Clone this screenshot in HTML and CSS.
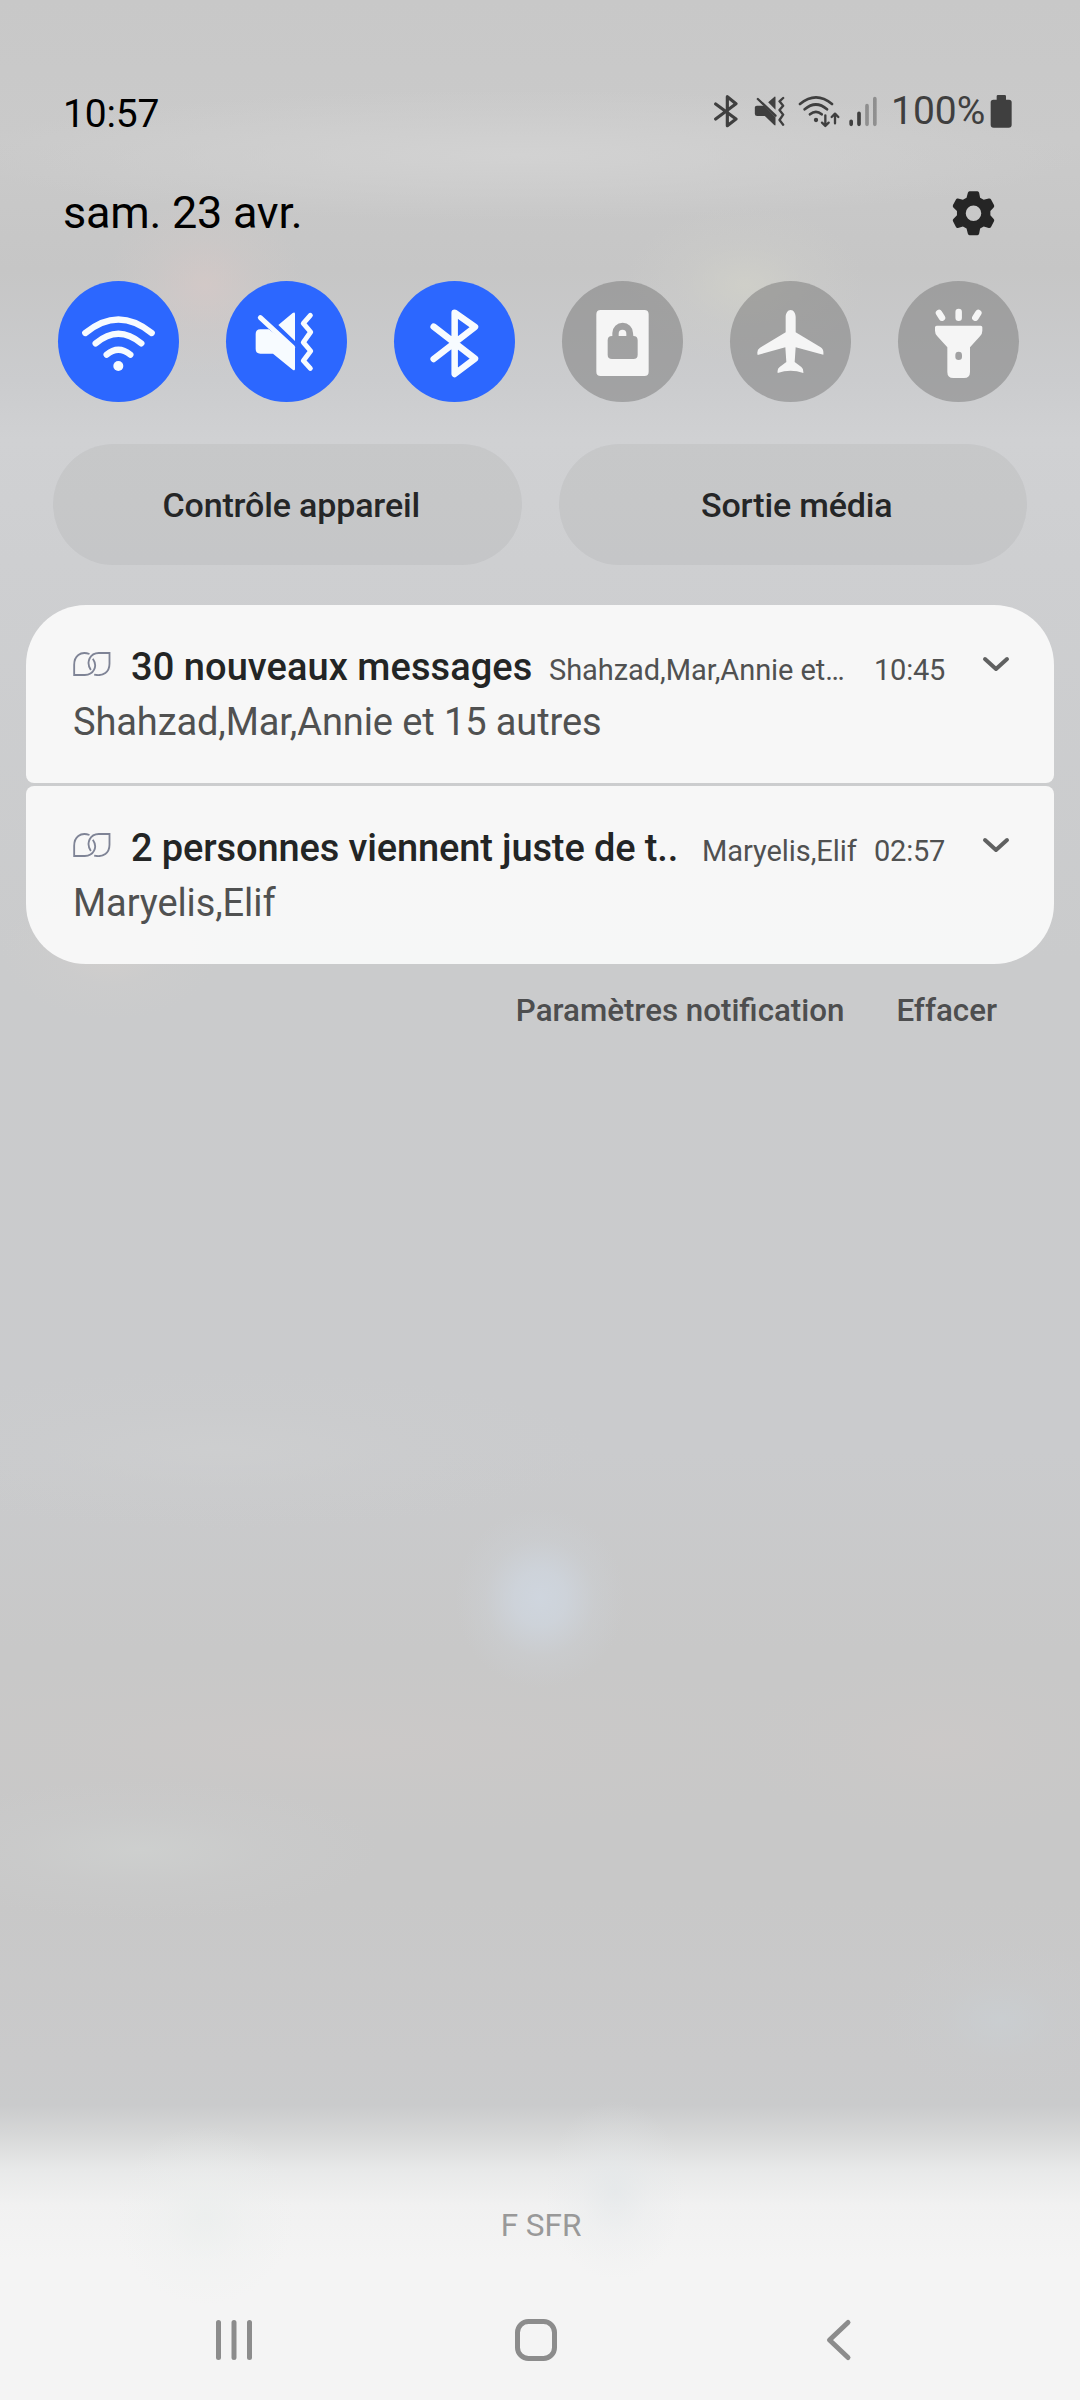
FILE: index.html
```html
<!DOCTYPE html>
<html lang="fr">
<head>
<meta charset="utf-8">
<title>Notifications</title>
<link rel="stylesheet" href="styles.css">
</head>
<body>
<div class="screen">
  <header class="status">
    <span class="clock">10:57</span>
    <div class="indicators">
      <svg class="i-bt" viewBox="100 72 72 102"><path class="line w8" d="M105 102 L166 147 L140 167 V80 L166 101 L105 147"/></svg>
      <svg class="i-mute" viewBox="220 72 92 102"><path class="solid" d="M262 97 L281 80 Q284 79 284 82 V119 Z M222 112 Q222 107 228 107 H238 L250 107 L284 142 V164 Q284 168 280 165 L252 138 H229 Q222 138 222 131 Z"/><path class="line w6" d="M231 87 L284 137 M307 84 L296 94 L307 107 L296 120 L307 134 L296 150 L307 164"/></svg>
      <svg class="i-wifi" viewBox="351 72 126 102"><path class="line w7" d="M357 102 Q405 62 453 102 M371 118 Q405 89 438 118 M387 133 Q405 118 422 133"/><circle class="solid" cx="405" cy="150" r="6.5"/><path class="line w6" d="M433 136 V167 M423 158 L433 168 L443 158 M462 160 V131 M452 141 L462 131 L472 141"/></svg>
      <svg class="i-signal" viewBox="504 72 84 102"><path class="line w11" d="M510.500 154 V163 M534 130 V163"/><path class="line w11 faded" d="M558 107 V163 M581.500 86 V163"/></svg>
      <span class="percent">100%</span>
      <svg class="i-battery" viewBox="931 72 66 102"><path class="solid" d="M951 79 Q951 75 955 75 H975 Q979 75 979 79 V89 H988 Q996 89 996 97 V164 Q996 173 987 173 H942 Q933 173 933 164 V97 Q933 89 941 89 H951 Z"/></svg>
    </div>
  </header>

  <div class="date-row">
    <span>sam. 23 avr.</span>
    <svg class="gear" viewBox="816 358 130 138"><path d="M869 361 H893 Q897 361 898 366 L901 381 L912 387 L927 383 Q932 382 934 386 L943 403 Q945 407 942 410 L932 421 V434 L942 445 Q945 448 943 452 L934 469 Q932 473 927 472 L912 468 L901 474 L898 490 Q897 494 893 494 H869 Q865 494 864 490 L860 474 L849 468 L834 472 Q830 473 828 469 L819 452 Q817 448 820 445 L831 434 V421 L820 410 Q817 407 819 403 L828 386 Q830 382 834 383 L849 387 L860 381 L864 366 Q865 361 869 361 Z M881 404 A23.500 23.500 0 1 0 881 451 A23.500 23.500 0 1 0 881 404 Z"/></svg>
  </div>

  <div class="tiles">
    <div class="tile on"><svg viewBox="84 63 363 363"><path class="line w18" d="M166 219 Q265 138 365 219 M197 250 Q265 192 334 250 M230 284 Q265 254 301 284"/><circle class="solid" cx="265" cy="318" r="15"/></svg></div>
    <div class="tile on"><svg viewBox="588 63 363 363"><path class="solid" d="M745 195 L788 159 Q795 155 795 162 V243 Z M677 222 Q677 208 691 208 H716 L795 264 V326 Q795 334 788 329 L729 281 H691 Q677 281 677 267 Z"/><path class="line w15" d="M691 173 L788 262 M841 166 L820 190 L842 216 L820 247 L842 273 L820 302 L841 325"/></svg></div>
    <div class="tile on"><svg viewBox="1092 63 363 363"><path class="line w20" d="M1211 200 L1335 296 L1274 342 V158 L1335 201 L1211 297"/></svg></div>
    <div class="tile"><svg viewBox="66 63 363 363"><path class="solid" fill-rule="evenodd" d="M182 150 H313 Q326 150 326 163 V335 Q326 348 313 348 H182 Q169 348 169 335 V163 Q169 150 182 150 Z M216 228 Q203 228 203 241 V284 Q203 297 216 297 H280 Q293 297 293 284 V241 Q293 228 280 228 L279 219 A31 31 0 0 0 217 219 V228 Z M236 228 V221 A11.500 11.500 0 0 1 259 221 V228 Z"/></svg></div>
    <div class="tile"><svg viewBox="570 63 363 363"><path class="solid" d="M752 150 C761 150 767 160 767 172 V217 L842 262 Q852 268 850 284 L767 262 L764 306 L784 321 Q791 326 790 339 Q752 326 713 339 Q711 326 719 321 L739 306 L736 262 L653 285 Q649 269 660 263 L737 217 V172 C737 160 743 150 752 150 Z"/></svg></div>
    <div class="tile"><svg viewBox="1074 63 363 363"><path class="solid" fill-rule="evenodd" d="M1190 197 H1322 Q1327 197 1327 202 V212 Q1327 222 1320 229 L1290 262 V336 Q1290 354 1272 354 H1240 Q1222 354 1222 336 V262 L1192 229 Q1185 222 1185 212 V202 Q1185 197 1190 197 Z M1256 275 Q1246 275 1246 285 V291 Q1246 300 1256 300 Q1266 300 1266 291 V285 Q1266 275 1256 275 Z"/><path class="line w20" d="M1197 159 L1206 173 M1256 156 V173 M1315 159 L1306 173"/></svg></div>
  </div>

  <div class="shortcuts">
    <div class="shortcut">Contrôle appareil</div>
    <div class="shortcut">Sortie média</div>
  </div>

  <div class="notifications">
    <article class="card">
      <div class="head">
        <svg class="app" viewBox="21 37 113 72"><path d="M70 43 C42 33 24 50 24 75 V106 H56 C82 106 96 80 80 57 M84 105 C112 111 130 96 130 72 V40 H98 C72 40 58 67 74 91"/></svg>
        <span class="title t1">30 nouveaux messages</span>
        <span class="sub s1">Shahzad,Mar,Annie et…</span>
        <time>10:45</time>
        <svg class="chevron" viewBox="0 0 28 16"><path d="M3 3 L14 13 L25 3"/></svg>
      </div>
      <p>Shahzad,Mar,Annie et 15 autres</p>
    </article>
    <article class="card">
      <div class="head">
        <svg class="app" viewBox="21 37 113 72"><path d="M70 43 C42 33 24 50 24 75 V106 H56 C82 106 96 80 80 57 M84 105 C112 111 130 96 130 72 V40 H98 C72 40 58 67 74 91"/></svg>
        <span class="title t2">2 personnes viennent juste de t..</span>
        <span class="sub s2">Maryelis,Elif</span>
        <time>02:57</time>
        <svg class="chevron" viewBox="0 0 28 16"><path d="M3 3 L14 13 L25 3"/></svg>
      </div>
      <p>Maryelis,Elif</p>
    </article>
  </div>

  <div class="actions"><span>Paramètres notification</span><span>Effacer</span></div>

  <div class="carrier">F SFR</div>
  <nav class="nav">
    <svg viewBox="0 0 44 44"><path d="M6.500 4.500 V39.500 M22 4.500 V39.500 M37.500 4.500 V39.500"/></svg>
    <svg viewBox="0 0 44 44"><rect x="3.500" y="3.500" width="37" height="37" rx="11"/></svg>
    <svg viewBox="0 0 44 44"><path d="M32 4.500 L13.500 22 L32 39.500"/></svg>
  </nav>
</div>
</body>
</html>
```
FILE: styles.css
```css
body {
  margin: 0;
  font-family: Roboto, "Noto Sans", sans-serif;
}

.screen {
  width: 1080px;
  height: 2400px;
  box-sizing: border-box;
  padding-top: 88px;
  display: flex;
  flex-direction: column;
  overflow: hidden;
  background:
    radial-gradient(ellipse 85px 90px at 540px 1598px, rgba(207, 214, 223, .95), rgba(207, 214, 223, .75) 30%, rgba(206, 211, 217, .3) 65%, transparent),
    radial-gradient(ellipse 100px 90px at 205px 285px, rgba(214, 201, 199, .75), rgba(212, 202, 200, .3) 50%, transparent),
    radial-gradient(ellipse 120px 80px at 745px 285px, rgba(209, 209, 201, .8), rgba(208, 208, 203, .3) 50%, transparent),
    radial-gradient(ellipse 560px 65px at 520px 155px, rgba(211, 211, 211, .9), rgba(210, 210, 210, .5) 50%, transparent),
    radial-gradient(ellipse 110px 70px at 110px 950px, rgba(210, 207, 205, .9), rgba(208, 206, 205, .3) 50%, transparent),
    radial-gradient(ellipse 240px 70px at 140px 1850px, rgba(206, 208, 207, .9), rgba(205, 206, 206, .35) 50%, transparent),
    radial-gradient(ellipse 560px 90px at 330px 1745px, rgba(205, 201, 200, .7), rgba(204, 201, 200, .3) 50%, transparent),
    radial-gradient(ellipse 200px 90px at 940px 1745px, rgba(205, 201, 200, .7), rgba(204, 201, 200, .3) 50%, transparent),
    radial-gradient(ellipse 380px 80px at 220px 1450px, rgba(206, 207, 208, .8), rgba(205, 206, 207, .3) 50%, transparent),
    radial-gradient(ellipse 120px 80px at 1000px 2020px, rgba(202, 206, 209, .9), rgba(202, 204, 206, .3) 50%, transparent),
    radial-gradient(ellipse 70px 90px at 615px 2190px, rgba(227, 231, 233, .7), rgba(229, 232, 234, .25) 50%, transparent),
    radial-gradient(ellipse 90px 90px at 205px 2215px, rgba(235, 238, 237, .8), rgba(235, 238, 237, .25) 50%, transparent),
    linear-gradient(#c8c8c8 0, #cacaca 140px, #c6c6c6 270px, #cbccce 380px, #d0d1d3 440px, #cecfd1 560px, #cacbcc 960px, #cacbcd 1450px, #c8c8c8 1650px, #c8c8c8 1900px, #cacacb 2060px, #cacbcc 2105px, #d9dada 2140px, #e8e9e9 2170px, #f1f1f1 2205px, #f4f4f4 2260px);
}

.status {
  display: flex;
  justify-content: space-between;
  align-items: flex-start;
  height: 50px;
  padding: 0 68px 0 63px;
}
.clock { font-size: 39px; line-height: 53px; letter-spacing: -.2px; color: #000; }
.indicators { display: flex; align-items: center; height: 46px; color: #3f3f3f; }
.indicators svg { height: 34px; }
.i-bt { width: 24px; margin-right: 16px; }
.i-mute { width: 31px; margin-right: 13px; }
.i-wifi { width: 42px; margin-right: 9px; }
.i-signal { width: 28px; margin-right: 14px; }
.i-battery { width: 22px; }
.percent { width: 94px; margin-right: 5px; font-size: 39px; line-height: 46px; white-space: nowrap; }

.line { fill: none; stroke: currentColor; stroke-linecap: round; stroke-linejoin: round; }
.solid { fill: currentColor; }
.w6 { stroke-width: 7; }
.w7 { stroke-width: 8; }
.w8 { stroke-width: 9.5; }
.w11 { stroke-width: 11; }
.w15 { stroke-width: 15; }
.w18 { stroke-width: 19; }
.w20 { stroke-width: 19.5; }
.faded { opacity: .42; }

.date-row {
  display: flex;
  justify-content: space-between;
  align-items: center;
  height: 50px;
  margin-top: 50px;
  padding: 0 85px 0 63px;
  font-size: 45px;
  line-height: 52px;
  letter-spacing: -.25px;
  color: #000;
}
.gear { width: 43px; height: 46px; fill: #252525; fill-rule: evenodd; }

.tiles { display: flex; gap: 47px; margin-top: 43px; padding-left: 58px; }
.tile { width: 121px; height: 121px; border-radius: 50%; background: rgba(120, 120, 120, .5); color: #f5f5f5; }
.tile svg { display: block; width: 121px; height: 121px; }
.tile.on { background: #2c67ff; color: #f7fbff; }

.shortcuts { display: flex; gap: 37px; margin-top: 42px; padding: 0 53px; }
.shortcut {
  flex: 1;
  height: 121px;
  box-sizing: border-box;
  padding-left: 8px;
  border-radius: 61px;
  background: rgba(0, 0, 0, .045);
  font-size: 34px;
  font-weight: 500;
  letter-spacing: -.15px;
  line-height: 122px;
  text-align: center;
  color: #252627;
}

.notifications { display: flex; flex-direction: column; gap: 3px; margin: 40px 26px 0; }
.card {
  height: 178px;
  box-sizing: border-box;
  padding: 37px 44px 0 47px;
  border-radius: 8px;
  background: rgba(250, 250, 250, .93);
  color: #505151;
}
.card:first-child { border-radius: 60px 60px 8px 8px; }
.card:last-child { border-radius: 8px 8px 60px 60px; }
.head { display: flex; align-items: baseline; height: 50px; line-height: 50px; white-space: nowrap; }
.app { align-self: flex-start; width: 38px; height: 24px; margin: 10px 20px 0 0; fill: none; stroke: #7f8496; stroke-width: 5.5; }
.title { font-size: 38px; font-weight: 500; color: #232525; }
.t1 { width: 418px; letter-spacing: .06px; }
.t2 { width: 571px; letter-spacing: -.13px; }
.sub, .card time { font-size: 29px; letter-spacing: -.06px; }
.s1 { width: 325px; }
.s2 { width: 172px; }
.card time { width: 74px; letter-spacing: -.2px; }
.chevron { align-self: flex-start; width: 28px; height: 16px; margin: 14px 0 0 auto; fill: none; stroke: #606161; stroke-width: 4; stroke-linecap: round; stroke-linejoin: round; }
.card p { margin: 5px 0 0; font-size: 38px; line-height: 50px; letter-spacing: -.1px; }

.actions {
  display: flex;
  justify-content: flex-end;
  gap: 52px;
  margin-top: 22px;
  padding-right: 83px;
  font-size: 31.3px;
  font-weight: 500;
  line-height: 50px;
  color: #4d4e4f;
}

.carrier { margin-top: auto; padding-left: 2px; font-size: 31.5px; line-height: 51px; text-align: center; color: #999; }
.nav { display: flex; gap: 258px; margin: 67px 0 38px 212px; }
.nav svg { width: 44px; height: 44px; fill: none; stroke: #8c8c8c; stroke-width: 5; stroke-linecap: round; stroke-linejoin: round; }
```
